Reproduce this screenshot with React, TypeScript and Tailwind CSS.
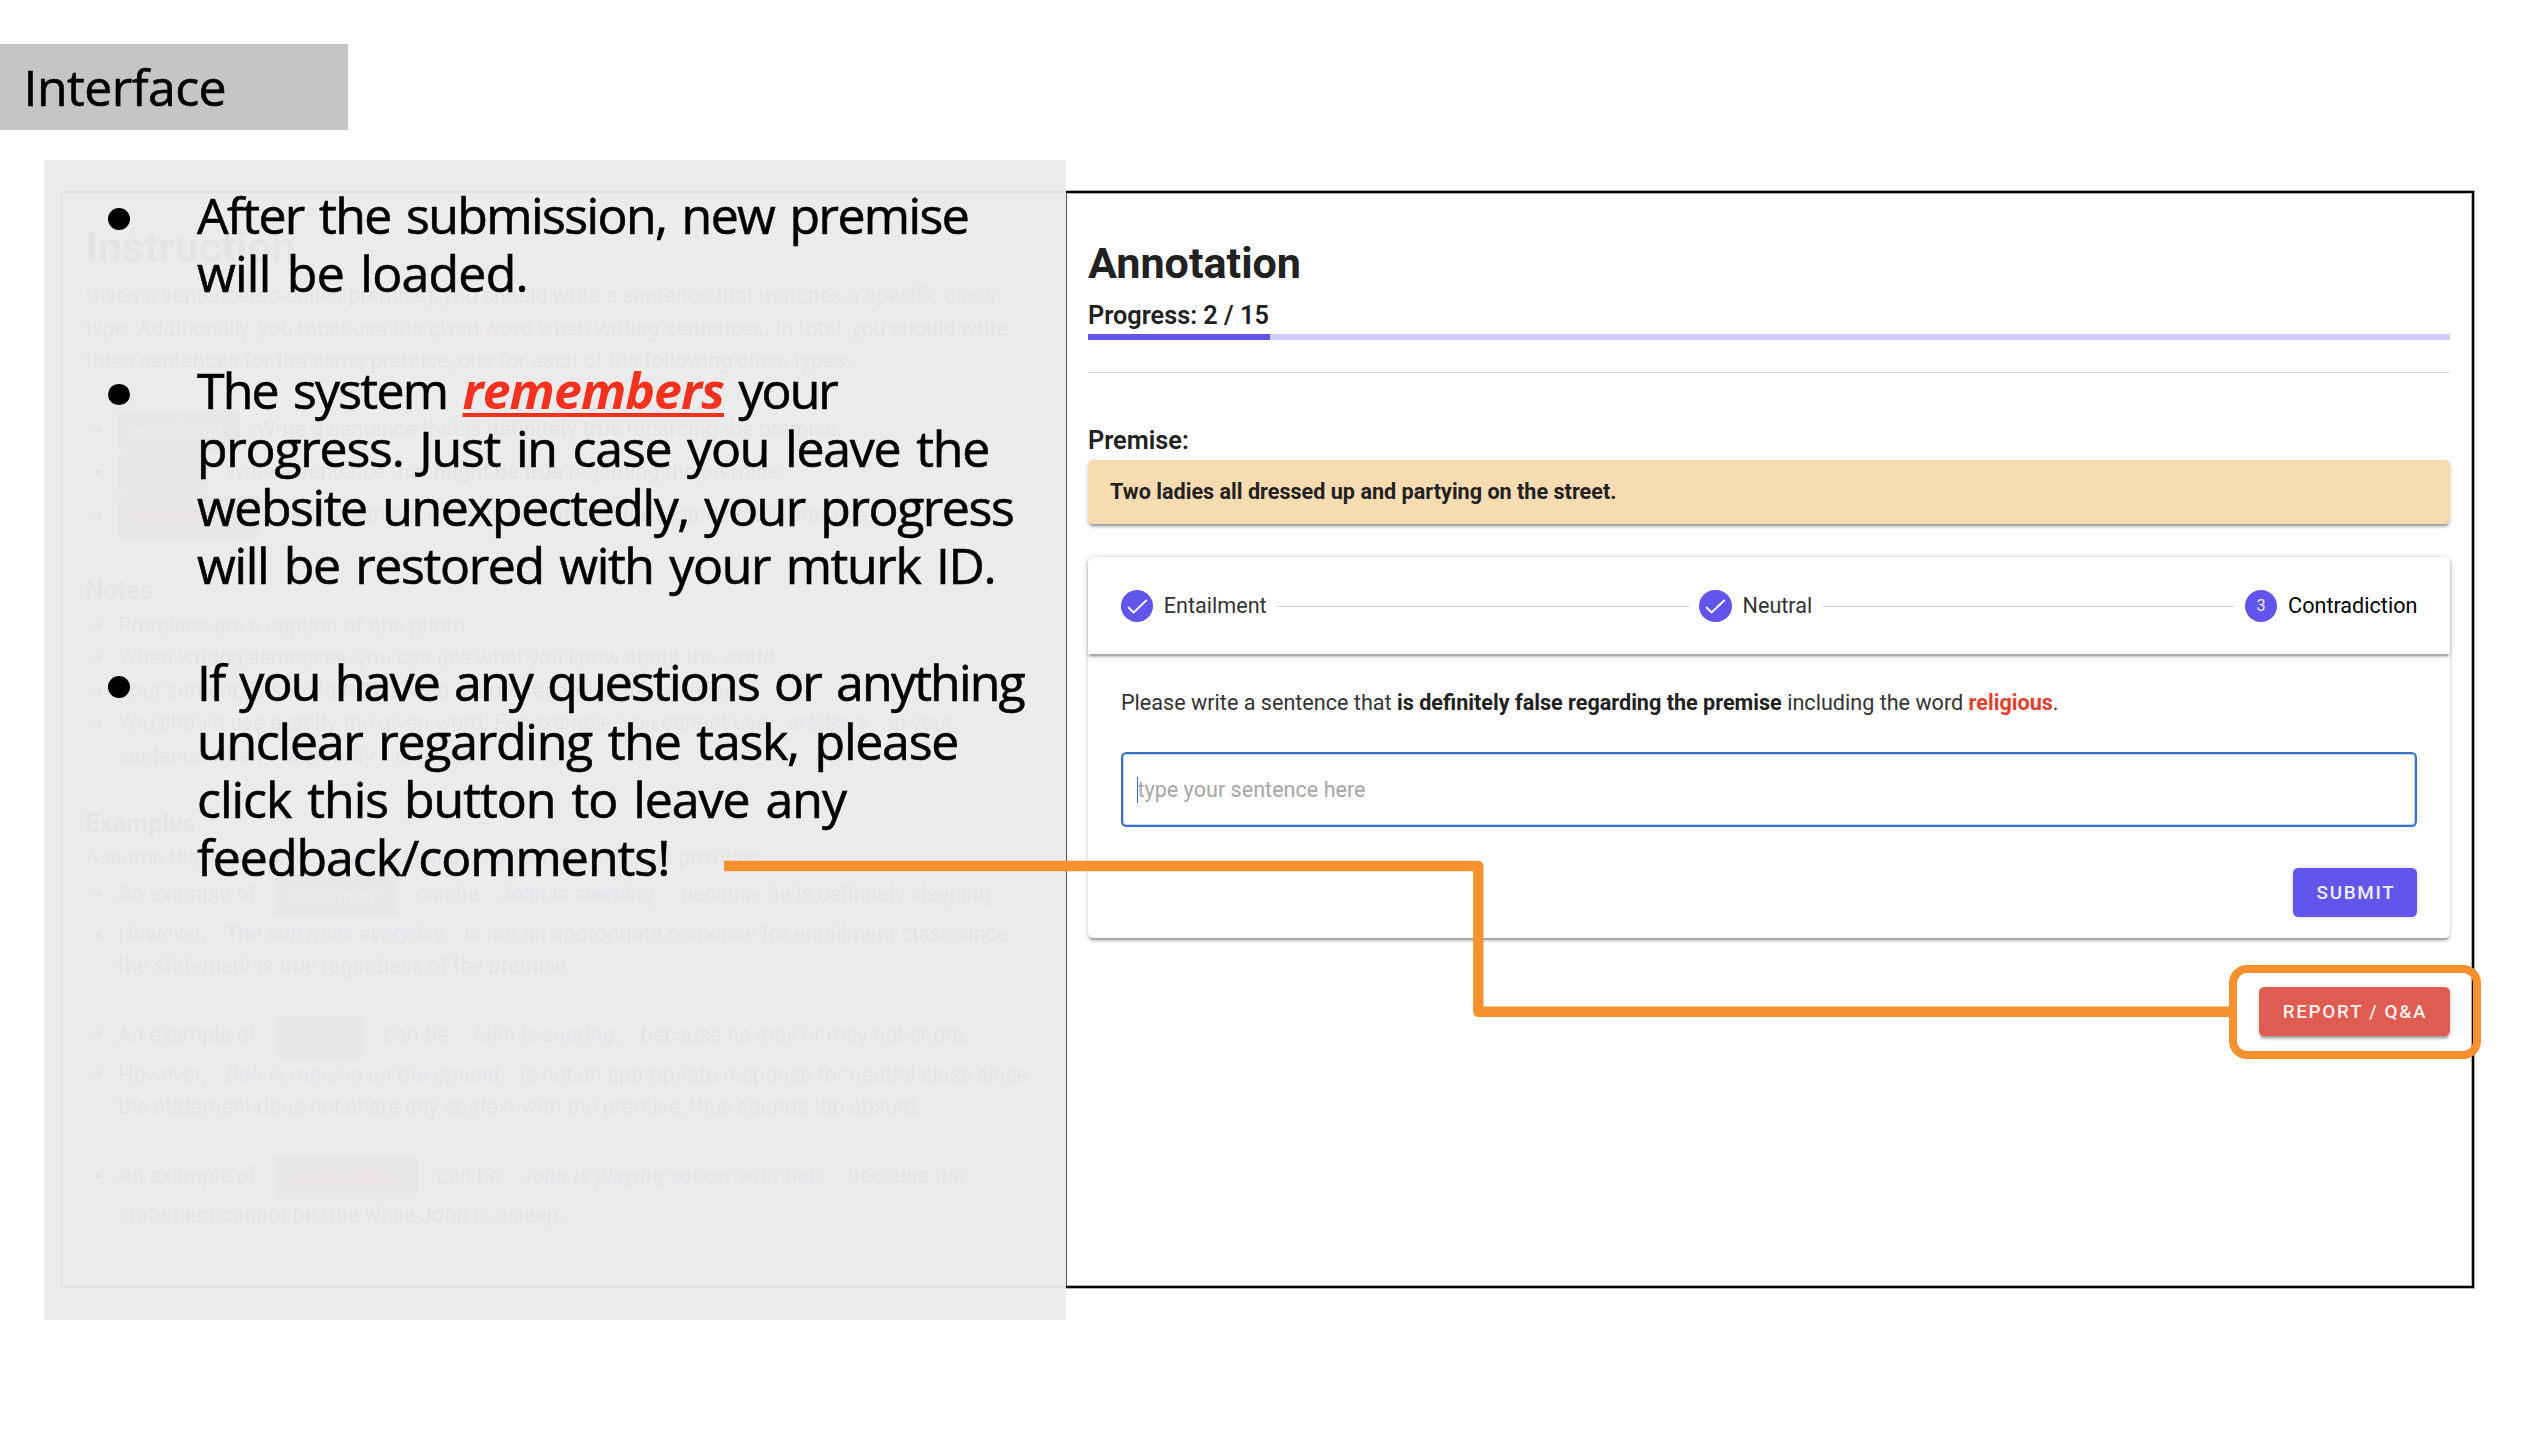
import type { ReactNode } from "react";

const ELEVATION =
  "shadow-[0_4px_1.5px_-2.7px_rgba(0,0,0,0.2),0_2.7px_2.7px_0_rgba(0,0,0,0.14),0_1.35px_6.75px_0_rgba(0,0,0,0.12)]";

const CHIP_STYLES = {
  entailment: "bg-[#4a7fae] text-white",
  neutral: "bg-[#9a8c3c] text-[#6a5a00]",
  contradiction: "bg-[#b07a45] text-[#9c2f7c]",
};

function Chip({ kind, inline = false }: { kind: keyof typeof CHIP_STYLES; inline?: boolean }) {
  return (
    <span
      className={`inline-flex h-[43px] items-center rounded-[5px] px-[16.2px] text-[18.9px] ${CHIP_STYLES[kind]} ${
        inline ? "mx-[18.7px]" : "mr-[6px]"
      }`}
    >
      {kind}
    </span>
  );
}

function Sample({ children }: { children: ReactNode }) {
  return <em className="mx-[14.8px] font-bold tracking-[0.08px] italic text-[#3b5be0]">{children}</em>;
}

function Item({ children }: { children: ReactNode }) {
  return (
    <li className="flex">
      <span className="flex h-[32.4px] w-[55px] shrink-0 items-center pl-[32px]">
        <i className="block size-[7px] rounded-full bg-[#333]" />
      </span>
      <span className="whitespace-nowrap">{children}</span>
    </li>
  );
}

function ChipItem({ children }: { children: ReactNode }) {
  return (
    <li className="flex h-[43px] items-center">
      <span className="flex w-[55px] shrink-0 items-center pb-[5px] pl-[32px]">
        <i className="block size-[7px] rounded-full bg-[#333]" />
      </span>
      {children}
    </li>
  );
}

function Txt({ children }: { children: ReactNode }) {
  return <span className="whitespace-pre pb-[4px]">{children}</span>;
}

function Instruction() {
  return (
    <section className="w-[1003px] shrink-0 pt-[30px] text-[21.6px] leading-[32.4px] text-[#212121]">
      <h1 className="pl-[22px] text-[43.2px] leading-[50px] font-bold">Instruction</h1>
      <p className="mt-[7.4px] whitespace-nowrap pl-[22.4px]">
        Given a sentence(so-called premise), you should write a sentence that matches a specific class
        <br />
        type. Additionally, you must use the given <b className="text-[#e04030]">word</b> when writing sentences. In
        total, you should write
        <br />
        three sentences for the same premise, one for each of the following class types.
      </p>
      <ul className="mt-[32.4px]">
        <ChipItem>
          <Chip kind="entailment" />
          <Txt>
            : Write a sentence that is <b>definitely true</b> regarding the premise.
          </Txt>
        </ChipItem>
        <ChipItem>
          <Chip kind="neutral" />
          <Txt>
            : Write a sentence that <b>might be true</b> regarding the premise.
          </Txt>
        </ChipItem>
        <ChipItem>
          <Chip kind="contradiction" />
          <Txt>
            : Write a sentence that is <b>definitely false</b> regarding the premise.
          </Txt>
        </ChipItem>
      </ul>
      <h2 className="mt-[36.4px] pl-[22.4px] text-[25.3px] leading-[32px] font-bold">Notes</h2>
      <ul className="mt-[2.7px]">
        <Item>Premises are a caption of one photo.</Item>
        <Item>When writing sentences, you can use what you know about the world.</Item>
        <Item>
          Your sentences should <b>NOT</b> sound absurd regarding the premise.
        </Item>
        <Item>
          You should use exaclty the given word. For example, you cannot use <Sample>arbitrary</Sample> in your
          <br />
          sentence when <Sample>arbitrarily</Sample> is given.
        </Item>
      </ul>
      <h2 className="mt-[35.8px] pl-[22.4px] text-[25.3px] leading-[32px] font-bold">Examples</h2>
      <p className="mt-[2.5px] whitespace-nowrap pl-[22.4px]">
        Assume that a premise <Sample>John is taking a nap on the sofa.</Sample> is provided.
      </p>
      <ul>
        <ChipItem>
          <Txt>An example of</Txt>
          <Chip kind="entailment" inline />
          <Txt>
            can be <Sample>John is sleeping.</Sample> because he is definitely sleeping.
          </Txt>
        </ChipItem>
        <Item>
          However, <Sample>The sun rises everyday</Sample> is not an appropriate response for entailment class since
          <br />
          the statement is true regardless of the premise.
        </Item>
      </ul>
      <ul className="mt-[33px]">
        <ChipItem>
          <Txt>An example of</Txt>
          <Chip kind="neutral" inline />
          <Txt>
            can be <Sample>John is snoring.</Sample> because he may or may not snore.
          </Txt>
        </ChipItem>
        <Item>
          However, <Sample>Bob is running on the ground</Sample> is not an appropriate response for neutral class since
          <br />
          the statement does not share any context with the premise, thus sounds too absurd.
        </Item>
      </ul>
      <ul className="mt-[33px]">
        <ChipItem>
          <Txt>An example of</Txt>
          <Chip kind="contradiction" inline />
          <Txt>
            can be <Sample>John is playing soccer with Bob.</Sample> because the
          </Txt>
        </ChipItem>
        <li className="pl-[55px]">statement cannot be true while John is asleep.</li>
      </ul>
    </section>
  );
}

function Step({ label, number, current = false }: { label: string; number?: number; current?: boolean }) {
  return (
    <div className="flex items-center gap-[10.8px]">
      <span className="flex size-[32.4px] items-center justify-center rounded-full bg-[#6155ec] text-[16.2px] text-[#e9e7ff]">
        {number ?? (
          <svg viewBox="0 0 24 24" className="size-[32.4px]" fill="none" stroke="#fff" strokeWidth="1.4">
            <path d="M5.2 12.6l4.2 4.1L19 7.4" />
          </svg>
        )}
      </span>
      <span className={current ? "text-black" : "text-[#333]"}>{label}</span>
    </div>
  );
}

function Annotation() {
  return (
    <section className="flex grow flex-col border-l border-[#555] pt-[46px] pr-[22px] pl-[21px] text-[21.6px] text-[#212121]">
      <h1 className="text-[43.1px] leading-[50px] font-bold">Annotation</h1>
      <p className="mt-[10px] text-[25.3px] leading-[33px] font-semibold">Progress: 2 / 15</p>
      <div className="mt-[2px] h-[6px] bg-[#cfcaf7]">
        <div className="h-full w-[182px] bg-[#6155ec]" />
      </div>
      <hr className="mt-[32px] h-px border-0 bg-[#dadada]" />
      <p className="mt-[51px] text-[25.3px] leading-[33px] font-semibold">Premise:</p>
      <div className={`mt-[3px] flex h-[64px] items-center rounded-[5.4px] bg-[#f8dcb1] px-[22px] font-bold ${ELEVATION}`}>
        Two ladies all dressed up and partying on the street.
      </div>

      <div className={`mt-[33px] rounded-[5.4px] bg-white ${ELEVATION}`}>
        <div className={`flex h-[97px] items-center gap-[10.8px] rounded-t-[5.4px] px-[32.6px] pt-px ${ELEVATION}`}>
          <Step label="Entailment" />
          <span className="h-px grow bg-[#d2d2d2]" />
          <Step label="Neutral" />
          <span className="h-px grow bg-[#d2d2d2]" />
          <Step label="Contradiction" number={3} current />
        </div>
        <div className="flex flex-col px-[33px] pt-[33px] pb-[21px]">
          <p className="leading-[32px] whitespace-nowrap text-[#333]">
            Please write a sentence that <b className="text-[#212121]">is definitely false regarding the premise</b>{" "}
            including the word <b className="text-[#e23e2e]">religious</b>.
          </p>
          <div className="mt-[33px] flex h-[75px] items-center rounded-[5.4px] border-2 border-[#3671c6] pt-px pl-[14px] text-[#a6a6a6] shadow-[inset_0_0_0_1px_rgba(54,113,198,0.3)]">
            <span className="h-[26px] w-[1.4px] bg-[#2f6cc8]" />
            <span className="-ml-px">type your sentence here</span>
          </div>
          <button className="mt-[41px] flex h-[49px] w-[124px] items-center justify-center self-end rounded-[5.4px] bg-[#6155ec] pt-px pl-[2px] text-[18.9px] font-medium tracking-[1.69px] text-[#f1f0ff] shadow-[0_0_4px_rgba(0,0,0,0.2)]">
            SUBMIT
          </button>
        </div>
      </div>

      <button
        className={`mt-[49px] flex h-[49px] w-[191px] items-center justify-center self-end rounded-[5.4px] bg-[#df5c52] pt-px pl-px text-[18.9px] font-medium tracking-[1.69px] text-[#fff0ee] ${ELEVATION}`}
      >
        REPORT / Q&amp;A
      </button>
    </section>
  );
}

function Bullet({ children }: { children: ReactNode }) {
  return (
    <li className="flex">
      <span className="flex h-[58.45px] w-[89px] shrink-0 items-center pt-[9px]">
        <i className="block size-[21.5px] rounded-full bg-black" />
      </span>
      <div>{children}</div>
    </li>
  );
}

export default function App() {
  return (
    <main className="relative h-[1430px] w-[2546px] overflow-hidden bg-white font-[Roboto,sans-serif]">
      <header className="pt-[44px]">
        <h1 className="flex h-[86px] w-[348px] items-center bg-[#c5c5c5] pl-[23.5px] font-['Open_Sans',sans-serif] text-[50px] tracking-[-0.55px] text-black [-webkit-text-stroke:0.6px_black]">
          Interface
        </h1>
      </header>

      <div className="mt-[61px] ml-[61px] flex h-[1097px] w-[2413px] border-2 border-black shadow-[0_0_0_1px_rgba(0,0,0,0.3),inset_0_0_0_1px_rgba(0,0,0,0.3)]">
        <Instruction />
        <Annotation />
      </div>

      <div className="absolute top-[160px] left-[44px] h-[1160px] w-[1022px] bg-[rgba(234,234,234,0.968)] pt-[25.5px] pl-[64px]">
        <ul className="flex flex-col gap-[58.45px] font-['Open_Sans',sans-serif] text-[50px] leading-[58.45px] whitespace-pre text-black [word-spacing:4px] [-webkit-text-stroke:0.6px_currentColor]">
          <Bullet>
            <p className="tracking-[-1.62px]">After the submission, new premise</p>
            <p className="tracking-[-0.75px]">will be loaded.</p>
          </Bullet>
          <Bullet>
            <p className="flex tracking-[-2px]">
              <span className="w-[265.5px] tracking-[-1.8px]">The system</span>
              <span className="mr-[15px] w-[261px] tracking-[-0.9px] font-bold text-[#f4311f] italic underline decoration-[4px] underline-offset-[4px] [-webkit-text-stroke:0]">
                remembers
              </span>
              <span>your</span>
            </p>
            <p className="tracking-[-1.22px]">progress. Just in case you leave the</p>
            <p className="tracking-[-1.44px]">website unexpectedly, your progress</p>
            <p className="tracking-[-1.37px]">will be restored with your mturk ID.</p>
          </Bullet>
          <Bullet>
            <p className="tracking-[-1.83px]">If you have any questions or anything</p>
            <p className="tracking-[-1.24px]">unclear regarding the task, please</p>
            <p className="tracking-[-1.03px]">click this button to leave any</p>
            <p className="tracking-[-1.02px]">feedback/comments!</p>
          </Bullet>
        </ul>
      </div>

      <svg className="pointer-events-none absolute inset-0" width="2546" height="1430" fill="none" stroke="#f7912f">
        <path d="M724 866H1478.3V1011.7H2232" strokeWidth="10.4" strokeLinejoin="round" />
      </svg>
      <div className="absolute top-[965px] left-[2229px] h-[94px] w-[252px] rounded-[18px] border-8 border-[#f7912f]" />
    </main>
  );
}
